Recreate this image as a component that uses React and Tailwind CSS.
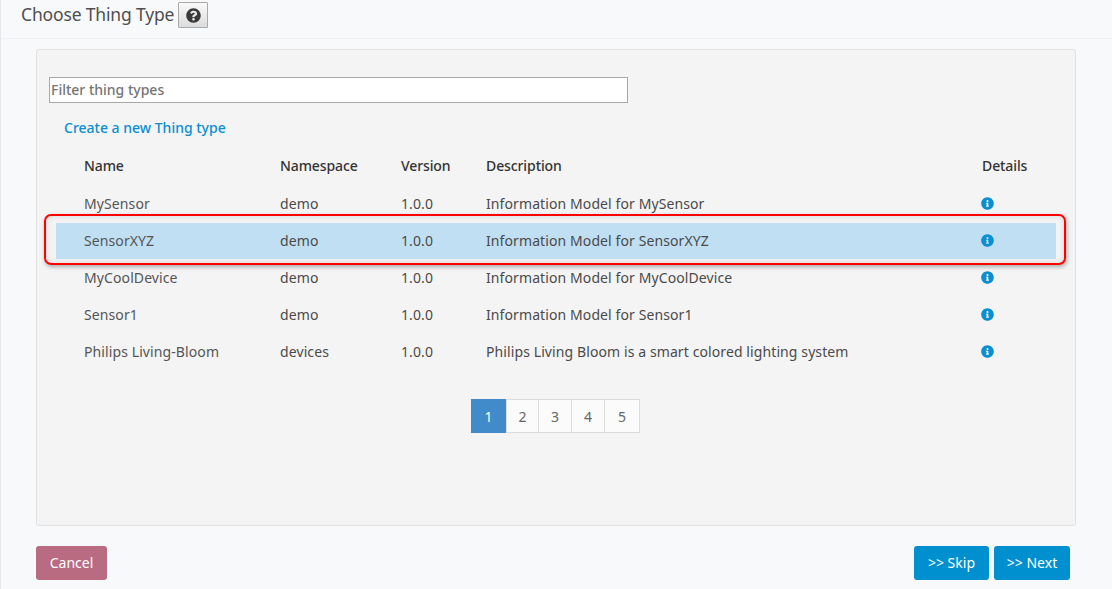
import React from "react";
import { FaInfoCircle, FaQuestionCircle } from "react-icons/fa";

const rows = [
  { name: "MySensor", ns: "demo", version: "1.0.0", desc: "Information Model for MySensor" },
  { name: "SensorXYZ", ns: "demo", version: "1.0.0", desc: "Information Model for SensorXYZ", selected: true },
  { name: "MyCoolDevice", ns: "demo", version: "1.0.0", desc: "Information Model for MyCoolDevice" },
  { name: "Sensor1", ns: "demo", version: "1.0.0", desc: "Information Model for Sensor1" },
  { name: "Philips Living-Bloom", ns: "devices", version: "1.0.0", desc: "Philips Living Bloom is a smart colored lighting system" },
];

export default function App() {
  return (
    <div className="h-[589px] w-[1112px] overflow-hidden bg-[#f8f9fb] border-l border-[#e6e8ee] font-['Noto_Sans',sans-serif] text-[#4a4a4a]">
      {/* Header */}
      <div className="flex h-[39px] items-start border-b border-[#f0f1f4] pl-5 pt-[2px]">
        <h1 className="text-[17.5px] leading-[24px] tracking-[-0.16px] text-[#4f4f4f]">Choose Thing Type</h1>
        <button className="ml-[4px] flex h-[26px] w-[30px] items-center justify-center rounded-[1px] border border-[#a9a9a9] bg-gradient-to-b from-[#fafafa] to-[#dcdcdc] text-[#3a3a3a]">
          <FaQuestionCircle size={15} />
        </button>
      </div>

      {/* Panel */}
      <div className="ml-[35px] mt-[10px] h-[477px] w-[1040px] rounded-[3px] border border-[#e2e2e2] bg-[#f4f4f4] pl-3 pt-[27px]">
        <input
          className="block h-[26px] w-[579px] border border-[#a8a8a8] bg-white px-[1px] pb-[2px] text-[14px] font-medium text-[#555] placeholder:text-[#757575]"
          placeholder="Filter thing types"
        />
        <a className="ml-[15px] mt-[15px] block text-[14px] font-medium leading-[20px] text-[#0a8fd0]">Create a new Thing type</a>

        {/* Table */}
        <div className="relative ml-[7px] mt-[10px] w-[1000px] text-[14px] tracking-[0.1px]">
          <table className="w-full table-fixed border-collapse">
            <thead>
              <tr className="h-[37px] text-left tracking-[-0.1px] text-[#333]">
                <th className="w-[224px] pb-[2px] pl-[28px] font-medium">Name</th>
                <th className="w-[121px] pb-[2px] font-medium">Namespace</th>
                <th className="w-[85px] pb-[2px] font-medium">Version</th>
                <th className="w-[496px] pb-[2px] font-medium">Description</th>
                <th className="pb-[2px] font-medium">Details</th>
              </tr>
            </thead>
            <tbody>
              {rows.map((row) => (
                <tr key={row.name} className={row.selected ? "h-[37px] border-t border-[#f4f4f4] bg-[#c0dff3]" : "h-[37px]"}>
                  <td className="pl-[28px] text-[#555]">{row.name}</td>
                  <td>{row.ns}</td>
                  <td>{row.version}</td>
                  <td>{row.desc}</td>
                  <td className="text-[#0a8fd0]">
                    <FaInfoCircle size={13} className="ml-[-1px]" />
                  </td>
                </tr>
              ))}
            </tbody>
          </table>
          {/* Red callout over the selected row */}
          <div className="pointer-events-none absolute left-[-12px] top-[66px] h-[51px] w-[1022px] rounded-[7px] border-2 border-[#f00] shadow-[1px_2px_4px_rgba(0,0,0,0.3),inset_0_0_6px_rgba(0,0,0,0.12)]" />
        </div>

        {/* Pagination */}
        <div className="ml-[422px] mt-[29px] flex h-[34px] w-fit text-[14px] text-[#666]">
          <span className="flex w-[35px] items-center justify-center bg-[#428bca] text-white">1</span>
          <div className="flex">
            {[2, 3, 4, 5].map((n) => (
              <span
                key={n}
                className="ml-[-1px] flex w-[34px] items-center justify-center border border-[#dcdcdc] bg-[#fbfbfb] first:ml-0 first:w-[33px] last:w-[36px]"
              >
                {n}
              </span>
            ))}
          </div>
        </div>
      </div>

      {/* Footer buttons */}
      <div className="ml-[35px] mt-[20px] flex w-[1034px] justify-between text-[14px] text-white">
        <button className="h-[34px] w-[71px] rounded-[3px] bg-[#b96b82] pb-[2px]">Cancel</button>
        <div className="flex gap-[5px]">
          <button className="h-[34px] w-[75px] rounded-[3px] bg-[#0090d0] pb-[2px]">&gt;&gt; Skip</button>
          <button className="h-[34px] w-[76px] rounded-[3px] bg-[#0090d0] pb-[2px]">&gt;&gt; Next</button>
        </div>
      </div>
    </div>
  );
}
